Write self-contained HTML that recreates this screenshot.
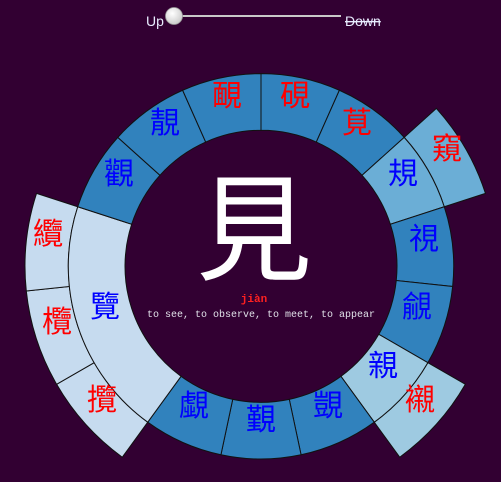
<!DOCTYPE html>
<html><head><meta charset="utf-8"><style>
html,body{margin:0;padding:0;background:#320032;width:501px;height:482px;overflow:hidden}
svg{display:block}
.c{font-family:"Liberation Sans","Noto Sans CJK TC","Noto Sans CJK SC",sans-serif;font-size:30px;text-anchor:middle}
.b{fill:#0000ff}.r{fill:#ff0000}
</style></head><body>
<svg id="s" width="501" height="482" viewBox="0 0 501 482" xmlns="http://www.w3.org/2000/svg">
<rect width="501" height="482" fill="#320032"/>
<g id="segs"></g>
<text x="146" y="26" font-family="Liberation Sans,sans-serif" font-size="14" fill="#e8ecff">Up</text>
<line x1="180" y1="16" x2="341" y2="16" stroke="#c8c8c8" stroke-width="2"/>
<defs><radialGradient id="kg" cx="0.4" cy="0.35" r="0.7"><stop offset="0" stop-color="#ffffff"/><stop offset="1" stop-color="#c8c8c8"/></radialGradient></defs>
<circle cx="174" cy="16" r="8.5" fill="url(#kg)" stroke="#999" stroke-width="0.8"/>
<text x="345" y="26" font-family="Liberation Sans,sans-serif" font-size="14" fill="#e8ecff" text-decoration="line-through">Down</text>
<text x="254" y="271" font-family="Liberation Sans,'Noto Sans CJK TC',sans-serif" font-size="116" fill="#ffffff" text-anchor="middle">見</text>
<text x="254" y="302" font-family="Liberation Mono,monospace" font-size="11" font-weight="bold" fill="#ff2020" text-anchor="middle">jiàn</text>
<text x="261" y="317" font-family="Liberation Mono,monospace" font-size="10" fill="#e0e0e8" text-anchor="middle">to see, to observe, to meet, to appear</text>
<g class="c">
<text class="r" x="295" y="106">硯</text>
<text class="r" x="357" y="133">莧</text>
<text class="b" x="403" y="184">規</text>
<text class="b" x="424" y="249">視</text>
<text class="b" x="417" y="317">覦</text>
<text class="b" x="383" y="376">親</text>
<text class="b" x="328" y="416">覬</text>
<text class="b" x="261" y="430">覲</text>
<text class="b" x="194" y="416">覷</text>
<text class="b" x="105" y="317">覽</text>
<text class="b" x="119" y="184">觀</text>
<text class="b" x="165" y="133">靚</text>
<text class="r" x="227" y="106">靦</text>
<text class="r" x="447" y="159">窺</text>
<text class="r" x="420" y="410">襯</text>
<text class="r" x="102" y="410">攬</text>
<text class="r" x="57" y="332">欖</text>
<text class="r" x="48" y="244">纜</text>
</g>
</svg>
<script>
(function(){
var cx=261,cy=266.3,ns="http://www.w3.org/2000/svg",g=document.getElementById("segs");
function pt(r,a){a=a*Math.PI/180;return [cx+r*Math.sin(a),cy-r*Math.cos(a)];}
function seg(r0,r1,a0,a1,fill){
 var p1=pt(r1,a0),p2=pt(r1,a1),p3=pt(r0,a1),p4=pt(r0,a0),lg=(a1-a0)>180?1:0;
 var d="M"+p1+"A"+r1+","+r1+" 0 "+lg+" 1 "+p2+"L"+p3+"A"+r0+","+r0+" 0 "+lg+" 0 "+p4+"Z";
 var e=document.createElementNS(ns,"path");e.setAttribute("d",d);e.setAttribute("fill",fill);
 e.setAttribute("stroke","#111");e.setAttribute("stroke-width","1");g.appendChild(e);}
var D="#3182bd";
var inner=[[0,24,D],[24,48,D],[48,72,"#6baed6"],[72,96,D],[96,120,D],[120,144,"#9ecae1"],[144,168,D],[168,192,D],[192,216,D],[216,288,"#c6dbef"],[288,312,D],[312,336,D],[336,360,D]];
var outer=[[48,72,"#6baed6"],[120,144,"#9ecae1"],[216,240,"#c6dbef"],[240,264,"#c6dbef"],[264,288,"#c6dbef"]];
outer.forEach(function(s){seg(192.7,236,s[0],s[1],s[2]);});
inner.forEach(function(s){seg(136,192.7,s[0],s[1],s[2]);});
})();
</script>
</body></html>
